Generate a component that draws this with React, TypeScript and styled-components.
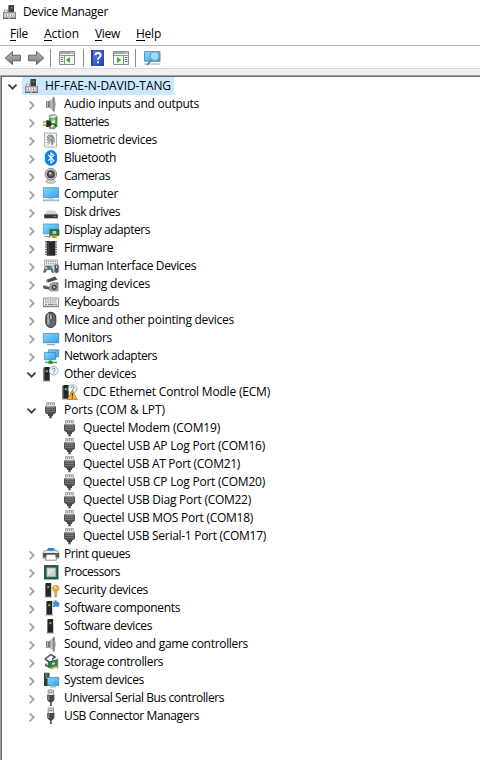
import React, { useLayoutEffect, useRef } from "react";
import styled, { createGlobalStyle } from "styled-components";

const GlobalStyle = createGlobalStyle`
  * { box-sizing: border-box; }
  html, body, #root { height: 100%; }
  body {
    margin: 0;
    overflow: hidden;
    background: #fff;
    color: #000;
    font-family: "Open Sans", "Noto Sans", sans-serif;
    font-size: 12px;
  }
  svg { display: block; flex: none; }
`;

const Window = styled.div`
  display: flex;
  flex-direction: column;
  width: 480px;
  height: 760px;
  overflow: hidden;
  background: #fff;
`;

const TitleBar = styled.header`
  display: flex;
  align-items: center;
  height: 24px;
  padding: 0 0 1px 2px;
  gap: 5px;
`;

const MenuBar = styled.nav`
  display: flex;
  height: 21px;
  padding: 1px 0 0 10px;
`;

const MenuItem = styled.span<{ $space: number }>`
  flex: none;
  width: ${(p) => p.$space}px;
`;

const Mnemonic = styled.span`
  display: inline-block;
  line-height: 14px;
  box-shadow: inset 0 -1px 0 #000;
`;

const Toolbar = styled.div`
  display: flex;
  align-items: center;
  height: 24px;
  padding: 2px 0 0 4px;
  border-top: 1px solid #b2b3bb;
  border-bottom: 1px solid #d9d9d9;
`;

const ToolButton = styled.span<{ $width: number }>`
  display: flex;
  justify-content: center;
  width: ${(p) => p.$width}px;
`;

const Separator = styled.span<{ $gap?: number }>`
  width: 1px;
  height: 18px;
  margin-left: ${(p) => p.$gap ?? 0}px;
  background: #8d8d8d;
`;

const Gutter = styled.div`
  height: 6px;
  background: #f0f0f0;
`;

const Tree = styled.main`
  flex: 1;
  border-top: 1px solid #a0a0a0;
  border-left: 1px solid #a0a0a0;
`;

const TreeInner = styled.div`
  height: 100%;
  border-top: 1px solid #696969;
  border-left: 1px solid #696969;
`;

const Row = styled.div<{ $level: number }>`
  display: flex;
  height: 18px;
  padding-left: ${(p) => 2 + p.$level * 19}px;
`;

const Node = styled.div<{ $selected?: boolean }>`
  display: flex;
  height: 18px;
  gap: 4px;
  padding: 0 3px 0 1px;
  background: ${(p) => (p.$selected ? "#cce8ff" : "transparent")};
`;

const Text = styled.span<{ $width: number }>`
  display: block;
  width: ${(p) => p.$width}px;
  line-height: 17px;
  white-space: nowrap;
`;

function Label({ text, width, children }: { text: string; width: number; children?: React.ReactNode }) {
  const ref = useRef<HTMLSpanElement>(null);
  useLayoutEffect(() => {
    const el = ref.current;
    if (!el) return;
    el.style.letterSpacing = "0px";
    const range = document.createRange();
    range.selectNodeContents(el);
    const natural = range.getBoundingClientRect().width;
    el.style.letterSpacing = `${(width - natural) / text.length}px`;
  }, [text, width]);
  return <Text ref={ref} $width={width}>{children ?? text}</Text>;
}

const Svg = ({ children }: { children: React.ReactNode }) => (
  <svg width="18" height="18" viewBox="0 0 18 18">{children}</svg>
);

const Chevron = ({ open }: { open?: boolean }) => (
  <Svg>
    {open ? (
      <path d="M4.5 7.7l4 4 4-4" fill="none" stroke="#404040" strokeWidth="1.9" />
    ) : (
      <path d="M6.6 6.3l4 4-4 4" fill="none" stroke="#a6a6a6" strokeWidth="1.9" />
    )}
  </Svg>
);

const Defs = styled.svg`
  position: absolute;
`;

const Gradients = () => (
  <Defs width="0" height="0">
    <defs>
      <linearGradient id="screen" x1="0" y1="0" x2="1" y2="1">
        <stop offset="0" stopColor="#8ad8ff" />
        <stop offset=".5" stopColor="#5cbdf5" />
        <stop offset="1" stopColor="#3a9fe6" />
      </linearGradient>
      <linearGradient id="metal" x1="0" y1="0" x2="1" y2="0">
        <stop offset="0" stopColor="#707070" />
        <stop offset=".5" stopColor="#c8c8c8" />
        <stop offset="1" stopColor="#777" />
      </linearGradient>
      <linearGradient id="arrow" x1="0" y1="0" x2="0" y2="1">
        <stop offset="0" stopColor="#bdbdbd" />
        <stop offset="1" stopColor="#777" />
      </linearGradient>
      <linearGradient id="green" x1="0" y1="0" x2="1" y2="0">
        <stop offset="0" stopColor="#1c9b2c" />
        <stop offset=".45" stopColor="#7be36f" />
        <stop offset="1" stopColor="#15862a" />
      </linearGradient>
      <linearGradient id="help" x1="0" y1="0" x2="1" y2="1">
        <stop offset="0" stopColor="#5a7fe0" />
        <stop offset="1" stopColor="#2340b0" />
      </linearGradient>
    </defs>
  </Defs>
);

const Tower = ({ x = 1.5 }: { x?: number }) => (
  <>
    <path d={`M${x} 3l1.2-1h5v14h-6.2z`} fill="#252525" />
    <path d={`M${x} 3v13h1V3z`} fill="#777" />
    <path d={`M${x - 0.5} 15.5h7.5v1h-7.5z`} fill="#999" />
    <path d={`M${x + 2.3} 5.2h2v2h-2z`} fill="#4be34a" />
  </>
);

const Query = ({ x, y }: { x: number; y: number }) => (
  <>
    <circle cx={x} cy={y} r="4.3" fill="#f4f9fd" stroke="#98a7b2" strokeWidth=".9" />
    <path d={`M${x - 1.5} ${y - 1.1}q.1-1.4 1.5-1.4t1.5 1.3q0 .8-.9 1.3-.6.4-.6 1.1M${x} ${y + 2}v1`} fill="none" stroke="#2b86cf" strokeWidth="1" />
  </>
);

const UsbComputer = () => (
  <>
    <path d="M7 3l1-1h5v8H7z" fill="#3f3f3f" />
    <path d="M7 3h1v7H7z" fill="#7c7c7c" />
    <path d="M10 4h1.2v1.2H10z" fill="#46e04b" />
    <path d="M3.5 7h3v3h-3z" fill="#eee" stroke="#999" strokeWidth=".8" />
    <path d="M2 9h13v7H2z" fill="#7d7d80" />
    <path d="M2.8 9.6h11.4v5.8H2.8z" fill="#c3c3c7" />
    <path d="M4 11h3v2.5H4zM9 11h3v2.5H9z" fill="#fff" />
    <path d="M4.8 11.5h1.2v2H4.8zM10 11.5h1.2v2H10z" fill="#777" />
    <path d="M2 14.8h5.2V16H2zM9 14.8h6V16H9z" fill="#606060" />
  </>
);

const Speaker = () => (
  <>
    <path d="M4 6.3h3.3v6.4H4z" fill="#777" />
    <path d="M5 7h1v5H5z" fill="#bbb" />
    <path d="M7 6.3L12 1.7v15l-5-4.5z" fill="url(#metal)" />
    <path d="M12 1.7q2.6 7.2 0 15-1.6-7.2 0-15z" fill="#a2a6a9" stroke="#808080" strokeWidth=".6" />
  </>
);

const Port = () => (
  <>
    <path d="M4.6 1.5h8v5h-8z" fill="#e6e6e6" stroke="#9b9b9b" strokeWidth=".7" />
    <path d="M6.2 2v2m2.3-2v2m2.3-2v2" stroke="#777" strokeWidth=".9" />
    <path d="M3 5.5h11v6l-2 1.7H5l-2-1.7z" fill="#505050" />
    <path d="M4 6.3h9v1H4zM4 8.3h9v.8H4zM4 10.2h9v.8H4z" fill="#858585" />
    <path d="M6 13h5v2H9.7v2.2H7.3V15H6z" fill="#474747" />
  </>
);

const Usb = () => (
  <>
    <path d="M6.2 1h5.2v5.5H6.2z" fill="#eee" stroke="#858585" strokeWidth=".9" />
    <path d="M7.4 2.6h1v1.6h-1zM9.3 2.6h1v1.6h-1z" fill="#555" />
    <path d="M5.2 6h7.2v5l-2 2.3H7.2l-2-2.3z" fill="#484848" />
    <path d="M6 6.5h1.4v4.5H6z" fill="#858585" />
    <path d="M8 13h1.7v4H8z" fill="#555" />
  </>
);

const icons: Record<string, React.ReactNode> = {
  root: <UsbComputer />,
  speaker: <Speaker />,
  battery: (
    <>
      <path d="M7.5 2.5l5-1 2.6 2-.3 9.8-2.5 2.7-5-.7V4z" fill="url(#green)" stroke="#5b795b" strokeWidth=".8" />
      <path d="M7.5 3l5.4-1.4 2.1 2-2.2 1.6-5.3-.5z" fill="#e0e5e0" stroke="#859285" strokeWidth=".5" />
      <path d="M8.5 9.5l5-3-1.5 4.2h2.3L9 14.5z" fill="#e4fbd6" />
      <path d="M4.5 7.3q4.5-.3 5.1 2.9T6 14H4V7.5z" fill="#2c2c2c" />
      <path d="M.8 9h4M.8 12h4" stroke="#a98d43" strokeWidth="1.3" />
      <path d="M9 11q4.5-.5 5.5 2.5" fill="none" stroke="#333" strokeWidth="1.3" />
    </>
  ),
  finger: (
    <>
      <path d="M2.5 2h12v14h-12z" fill="#edf5f3" stroke="#a1b8b5" />
      <path d="M5 7q.4-3 3.5-3T12 7.5v4M4.8 9.5Q6 9 6 7.5T8.5 5.3t2.3 2.2v6M5 11.8q2.2-1 2.2-4 .1-1.2 1.3-1.2t1.2 1.2v6.4M6.2 13.5q2.3-2.5 2.3-5.5" fill="none" stroke="#555" strokeWidth=".75" />
    </>
  ),
  bluetooth: (
    <>
      <rect x="2.8" y="1.1" width="12.3" height="15.6" rx="6.1" fill="#0a84e8" />
      <path d="M6.2 6l5.6 5.4-2.8 2.4V3.9l2.8 2.4L6.2 11.7" fill="none" stroke="#fff" strokeWidth="1.1" />
    </>
  ),
  camera: (
    <>
      <path d="M4.3 14l2-2h5l2 2q1 2.2-4.5 2.2T4.3 14z" fill="#d9d9d9" stroke="#8a8a8a" strokeWidth=".8" />
      <circle cx="8.8" cy="7.2" r="5.8" fill="#c6c8c9" stroke="#777" strokeWidth=".9" />
      <circle cx="8.8" cy="7.2" r="4" fill="#3b3e41" />
      <circle cx="8.8" cy="7.2" r="2.2" fill="#68727a" />
      <circle cx="8" cy="6.2" r="1" fill="#eef4f8" />
    </>
  ),
  computer: (
    <>
      <path d="M1.4 2.7h15.2v9.8H1.4z" fill="url(#screen)" stroke="#3a87ba" strokeWidth=".7" />
      <path d="M6.5 13h5v1.5h-5z" fill="#c0d0da" />
      <path d="M1 14.5h16v1.7H1z" fill="#89a2b1" />
      <path d="M2 14.7h14v.7H2z" fill="#d5e2e9" />
    </>
  ),
  disk: (
    <>
      <path d="M5 7.5h8.3l2.5 4.2H2.3z" fill="#d5d5d5" />
      <path d="M2.2 11.3h13.6v4H2.2z" fill="#343434" />
      <path d="M2.2 11.2h13.6v.8H2.2z" fill="#777" />
      <path d="M11.8 12.8h1.8v1.2h-1.8z" fill="#35df4d" />
    </>
  ),
  display: (
    <>
      <path d="M1.4 3h15.2v9.8H1.4z" fill="url(#screen)" stroke="#4a8fb9" strokeWidth=".7" />
      <path d="M2 15h6v1H2z" fill="#8da5b3" />
      <path d="M8 8.5h9v6H8z" fill="#237d43" stroke="#145c30" strokeWidth=".6" />
      <path d="M10.7 10h3.5v3h-3.5z" fill="#b5cbb8" />
      <path d="M7 7.7h1.2v9H7z" fill="#777" />
      <path d="M9.5 14.5h5.5V17H9.5z" fill="#e4a52b" />
      <path d="M11 15v2m2-2v2" stroke="#9c6911" strokeWidth=".5" />
    </>
  ),
  firmware: (
    <>
      <path d="M3 3h12M3 5.5h12M3 8h12M3 10.5h12M3 13h12M3 15.3h12" stroke="#777" strokeWidth="1.3" />
      <path d="M4.8 2h2.7q1.5 1.5 3 0h2.7v14.8H4.8z" fill="#292929" />
      <path d="M5.6 3h1.2v13H5.6z" fill="#505050" />
    </>
  ),
  hid: (
    <>
      <path d="M2.5 3h13v6h-13z" fill="#edf0f2" stroke="#93999d" strokeWidth=".8" />
      <path d="M4 4.7h10M4 6.8h10" stroke="#7b8287" strokeDasharray="1 .8" />
      <path d="M1.2 15.3L2.7 9.5q3.3-1.5 7.3 0l2 5.7q-.8 1.5-2.2.3L8.7 13H5l-1.5 2.5q-1 .8-2.3-.2z" fill="#626b72" />
      <path d="M3 11.2h2.5M4.2 10v2.5" stroke="#eee" strokeWidth=".7" />
      <circle cx="8.9" cy="11.3" r="1.2" fill="#359fdd" />
      <rect x="12.2" y="7.3" width="4.6" height="8.7" rx="2.2" fill="#52585d" stroke="#959ca1" strokeWidth=".7" />
      <path d="M14.5 8.5v2.5" stroke="#d7e2e9" />
    </>
  ),
  imaging: (
    <>
      <path d="M4 5l9-3.5 2.5 3L6 7.5z" fill="#4e4e4e" />
      <path d="M4 4.7l1.7 3.2" stroke="#ababab" strokeWidth="1.3" />
      <path d="M1.2 10l6.3 1.3v3.5l-6.3-1.3z" fill="#555" />
      <path d="M1.5 10.3l6.3 1.3" stroke="#d8d8d8" />
      <path d="M8 9.2l2.5-1.4H16v8H8z" fill="#b6b6b6" stroke="#6c6c6c" strokeWidth=".8" />
      <circle cx="12.2" cy="12.2" r="2.7" fill="#434343" />
      <circle cx="12.2" cy="12.2" r="1.2" fill="#8db2bf" />
      <path d="M14 8.2h1.8v1.5H14z" fill="#d8552e" />
    </>
  ),
  keyboard: (
    <>
      <path d="M1.4 5h15.2v8.2H1.4z" fill="#edf0f2" stroke="#828a90" strokeWidth=".9" />
      <path d="M3 7h12M3 9h12" stroke="#687178" strokeDasharray="1 .7" />
      <path d="M3 11.3h2m1 0h6m1 0h2" stroke="#687178" />
      <path d="M1 13h16v1.2H1z" fill="#7e878e" />
    </>
  ),
  mouse: (
    <>
      <rect x="3.8" y="1.2" width="10" height="15.3" rx="5" fill="#626970" stroke="#2f3438" strokeWidth="1" />
      <rect x="5.2" y="2.5" width="2.2" height="11" rx="1.1" fill="#a5aaaf" />
      <rect x="7.8" y="3" width="2.2" height="6" rx="1" fill="#d6e4ef" stroke="#1b1f22" strokeWidth=".7" />
    </>
  ),
  monitor: (
    <>
      <path d="M1.4 4.4h15.2v9.4H1.4z" fill="url(#screen)" stroke="#397eac" strokeWidth=".7" />
      <path d="M5 15.2h8v1H5z" fill="#8199a6" />
    </>
  ),
  network: (
    <>
      <path d="M6.4 2.8h10.2v7H6.4z" fill="url(#screen)" stroke="#397eac" strokeWidth=".7" />
      <path d="M2.4 5.4h11.2v7.4H2.4z" fill="url(#screen)" stroke="#397eac" strokeWidth=".7" />
      <path d="M7.4 13h2v2h-2z" fill="#69a36d" />
      <path d="M3 14.7h12v1.5H3z" fill="#34b24a" />
      <path d="M6.5 14h4v2.8h-4z" fill="#279039" />
    </>
  ),
  unknown: (
    <>
      <Tower />
      <Query x={11.7} y={5.8} />
    </>
  ),
  warning: (
    <>
      <Tower />
      <Query x={11.5} y={6} />
      <path d="M11.3 7.2l4.9 9.3H6.4z" fill="#f7b52c" stroke="#b76b12" strokeWidth=".7" />
      <path d="M10.8 10h1.1v3.3h-1.1zM10.8 14.2h1.1v1.2h-1.1z" fill="#2d2515" />
    </>
  ),
  port: <Port />,
  printer: (
    <>
      <path d="M5 5l1-2h6l1.5 2v2H5z" fill="#1683dc" />
      <path d="M11 3.5h2L14 6h-2z" fill="#3bd4bd" />
      <path d="M2.5 5.5h13l1.4 2.3v5.5H1V7.5z" fill="#e3e4e5" stroke="#858585" strokeWidth=".7" />
      <path d="M1 8h16v4.5H1z" fill="#505458" />
      <path d="M4.5 9.5h9l1 5.7h-11z" fill="#fff" stroke="#767676" strokeWidth=".8" />
      <path d="M14 8.8h1.5v.8H14z" fill="#e6833e" />
    </>
  ),
  cpu: (
    <>
      <path d="M2 2h14.5v14.5H2z" fill="#2b6b4f" />
      <path d="M3 3h12.5v12.5H3z" fill="none" stroke="#163e2c" strokeDasharray="1 1" />
      <path d="M5 5h8.5v8.5H5z" fill="#e2e5e3" stroke="#a9b2ad" strokeWidth=".8" />
      <path d="M13 5.5V13H5.5z" fill="#cdd2cf" />
    </>
  ),
  security: (
    <>
      <Tower x={3} />
      <circle cx="13.7" cy="7.3" r="3" fill="#efba54" stroke="#bc7f24" strokeWidth=".8" />
      <circle cx="13.7" cy="6.3" r=".8" fill="#fff" />
      <path d="M12.8 9.7h1.8v5.8l-.9 1-.9-1z" fill="#e5a940" stroke="#bc7f24" strokeWidth=".5" />
    </>
  ),
  component: (
    <>
      <Tower x={4} />
      <path d="M10.7 2.7h2V1.2h2v1.5h2v1.6h.8v1.8h-.8v2h-2V7.3h-1.6v.8h-2.4V6.2h.8V4.5h-.8z" fill="#3e8fd0" />
    </>
  ),
  software: <Tower x={5} />,
  storage: (
    <>
      <path d="M3 5.8l6-4.2 4 2.5-3 2.3M3 5.8l5 4 3-2" fill="none" stroke="#444" strokeWidth="1.5" />
      <path d="M4 5.8l5-3.2 2.5 1.8" fill="none" stroke="#bbb" strokeWidth=".8" />
      <path d="M3 10.2l3.3-1 4 2.2-3.2 2z" fill="#d2d2d2" />
      <path d="M3 10.5l4 2.5v2l-4-2.2z" fill="#555" />
      <path d="M6.5 9l9-2.5v6L8 15.3 6.5 14z" fill="#278348" stroke="#17592d" strokeWidth=".6" />
      <path d="M10 10l3-.8v2l-3 .9z" fill="#bde8c1" />
      <path d="M8 15l7-2.3v1.8L9.5 16.5z" fill="#d9b13f" />
      <path d="M15.7 5.5v9.8" stroke="#777" />
    </>
  ),
  system: (
    <>
      <path d="M2 1.7h5.5V15H2z" fill="#393939" />
      <path d="M3 2.8h3.5M3 4.7h3.5" stroke="#9b9b9b" strokeWidth=".8" />
      <path d="M4 6h1.5v1.5H4z" fill="#4be34a" />
      <path d="M5.4 6.4h11.2v8H5.4z" fill="url(#screen)" stroke="#397eac" strokeWidth=".7" />
      <path d="M8 15.4h6v1H8z" fill="#8199a6" />
    </>
  ),
  usb: <Usb />,
};

type Device = [label: string, icon: string, width: number, level?: number, open?: boolean];

const devices: Device[] = [
  ["HF-FAE-N-DAVID-TANG", "root", 126, 0, true],
  ["Audio inputs and outputs", "speaker", 135],
  ["Batteries", "battery", 45],
  ["Biometric devices", "finger", 93],
  ["Bluetooth", "bluetooth", 52],
  ["Cameras", "camera", 46],
  ["Computer", "computer", 54],
  ["Disk drives", "disk", 56],
  ["Display adapters", "display", 86],
  ["Firmware", "firmware", 49],
  ["Human Interface Devices", "hid", 132],
  ["Imaging devices", "imaging", 86],
  ["Keyboards", "keyboard", 55],
  ["Mice and other pointing devices", "mouse", 170],
  ["Monitors", "monitor", 48],
  ["Network adapters", "network", 93],
  ["Other devices", "unknown", 72, 1, true],
  ["CDC Ethernet Control Modle (ECM)", "warning", 187, 2],
  ["Ports (COM & LPT)", "port", 101, 1, true],
  ["Quectel Modem (COM19)", "port", 137, 2],
  ["Quectel USB AP Log Port (COM16)", "port", 182, 2],
  ["Quectel USB AT Port (COM21)", "port", 157, 2],
  ["Quectel USB CP Log Port (COM20)", "port", 182, 2],
  ["Quectel USB Diag Port (COM22)", "port", 168, 2],
  ["Quectel USB MOS Port (COM18)", "port", 170, 2],
  ["Quectel USB Serial-1 Port (COM17)", "port", 183, 2],
  ["Print queues", "printer", 66],
  ["Processors", "cpu", 56],
  ["Security devices", "security", 84],
  ["Software components", "component", 116],
  ["Software devices", "software", 88],
  ["Sound, video and game controllers", "speaker", 184],
  ["Storage controllers", "storage", 99],
  ["System devices", "system", 80],
  ["Universal Serial Bus controllers", "usb", 160],
  ["USB Connector Managers", "usb", 135],
];

const menus: [string, number, number][] = [
  ["File", 18, 34],
  ["Action", 35, 51],
  ["View", 25, 41],
  ["Help", 25, 41],
];

const ArrowIcon = ({ flip }: { flip?: boolean }) => (
  <svg width="18" height="16" viewBox="0 0 18 16">
    <path
      transform={flip ? "translate(18 0) scale(-1 1)" : undefined}
      d="M1.2 8l7.3-6.5v3.7h8v5.6h-8v3.7z"
      fill="url(#arrow)"
      stroke="#666"
    />
  </svg>
);

const PaneIcon = ({ right }: { right?: boolean }) => (
  <svg width="16" height="14" viewBox="0 0 16 14">
    <path d="M.5.5h15v13H.5z" fill="#f7f8f9" stroke="#888e96" />
    <path d="M1 1h14v2H1z" fill="#a1a8b1" />
    <path d="M12 1.5h1v1h-1zM14 1.5h1v1h-1z" fill="#fff" />
    <path d="M1 4.5h14" stroke="#8b929a" />
    {right ? (
      <>
        <path d="M10.5 5v8" stroke="#8b929a" />
        <path d="M12 6.5h2.5M12 8.5h2.5M12 10.5h2.5" stroke="#537ba6" />
        <path d="M4 6l4.2 3L4 12z" fill="#3fae2a" />
      </>
    ) : (
      <>
        <path d="M5.5 5v8" stroke="#8b929a" />
        <path d="M1.7 6.5h2.5M1.7 8.5h2.5M1.7 10.5h2.5" stroke="#537ba6" />
        <path d="M11 6L6.8 9l4.2 3z" fill="#3fae2a" />
      </>
    )}
  </svg>
);

const HelpIcon = () => (
  <svg width="13" height="16" viewBox="0 0 13 16">
    <path d="M0 0h13v16H0z" fill="#253f9c" />
    <path d="M2 .5h10.5v15H2z" fill="url(#help)" />
    <path d="M4.4 5.3q0-2.3 2.6-2.3t2.6 2.2q0 1.3-1.5 2.2Q7 8.1 7 9.7M7 11.2v2" fill="none" stroke="#fff" strokeWidth="1.8" />
  </svg>
);

const ScanIcon = () => (
  <svg width="17" height="16" viewBox="0 0 17 16">
    <path d="M.5 1.5h15.5v9.8H.5z" fill="url(#screen)" stroke="#3f87b5" strokeWidth=".8" />
    <path d="M0 13.5h16.5v1H0z" fill="#9baab3" />
    <path d="M3 15l4.5-5" stroke="#667a87" strokeWidth="1.8" />
    <circle cx="10.7" cy="6.2" r="4.4" fill="#b4e4fb" fillOpacity=".75" stroke="#7896a8" />
  </svg>
);

export default function App() {
  return (
    <Window>
      <GlobalStyle />
      <Gradients />
      <TitleBar>
        <svg width="16" height="18" viewBox="1 0 16 18"><UsbComputer /></svg>
        <Label text="Device Manager" width={85} />
      </TitleBar>
      <MenuBar>
        {menus.map(([name, width, space]) => (
          <MenuItem key={name} $space={space}>
            <Label text={name} width={width}>
              <Mnemonic>{name[0]}</Mnemonic>
              {name.slice(1)}
            </Label>
          </MenuItem>
        ))}
      </MenuBar>
      <Toolbar>
        <ToolButton $width={18}><ArrowIcon /></ToolButton>
        <ToolButton $width={28}><ArrowIcon flip /></ToolButton>
        <Separator />
        <ToolButton $width={32}><PaneIcon /></ToolButton>
        <Separator />
        <ToolButton $width={27}><HelpIcon /></ToolButton>
        <ToolButton $width={20}><PaneIcon right /></ToolButton>
        <Separator $gap={4} />
        <ToolButton $width={33}><ScanIcon /></ToolButton>
      </Toolbar>
      <Gutter />
      <Tree>
        <TreeInner>
          {devices.map(([label, icon, width, level = 1, open]) => (
            <Row key={label} $level={level}>
              {level < 2 ? <Chevron open={open} /> : <Svg>{null}</Svg>}
              <Node $selected={level === 0}>
                <Svg>{icons[icon]}</Svg>
                <Label text={label} width={width} />
              </Node>
            </Row>
          ))}
        </TreeInner>
      </Tree>
    </Window>
  );
}
